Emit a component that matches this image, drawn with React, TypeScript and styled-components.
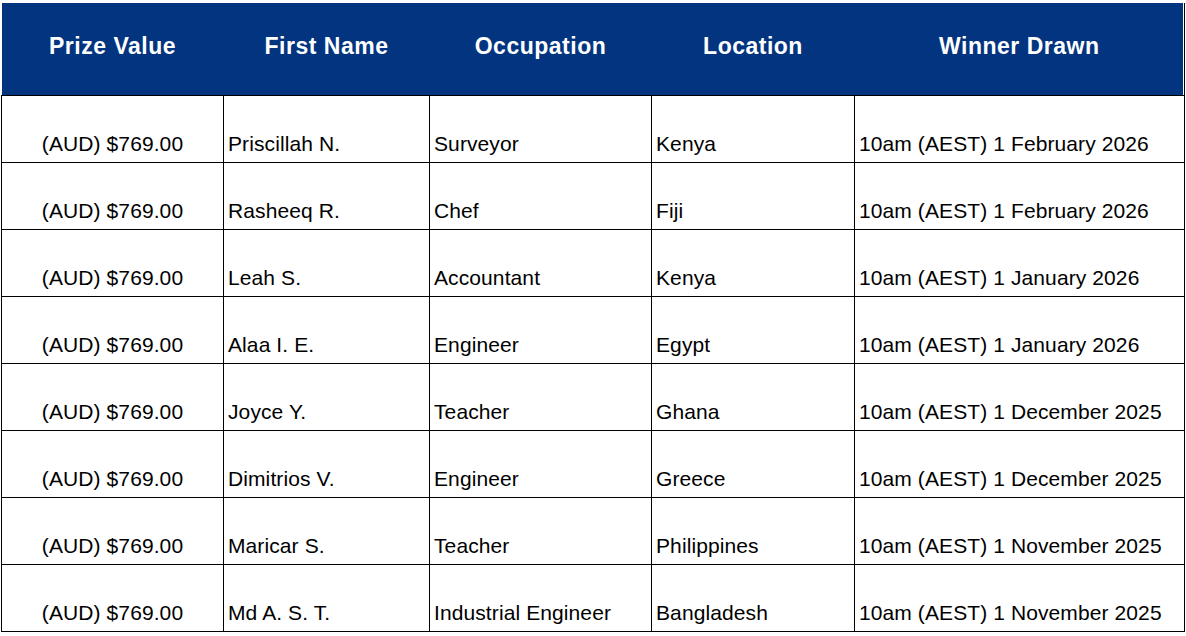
import React from 'react';
import styled, { createGlobalStyle } from 'styled-components';

const GlobalStyle = createGlobalStyle`
  html, body {
    margin: 0;
    padding: 0;
    background: #ffffff;
  }
  body {
    font-family: 'Liberation Sans', Arial, sans-serif;
  }
`;

const Wrapper = styled.div`
  padding: 3px 0 0 1px;
  width: 1186px;
  height: 636px;
  box-sizing: border-box;
  overflow: hidden;
`;

const Table = styled.table`
  width: 1183px;
  border-collapse: collapse;
  table-layout: fixed;
  color: #000;
`;

const HeadCell = styled.th<{ $w: number }>`
  width: ${(p) => p.$w}px;
  height: 92px;
  padding: 0 0 5px;
  background: #02347f;
  color: #fff;
  font-size: 23px;
  font-weight: 700;
  letter-spacing: 0.5px;
  text-align: center;
  vertical-align: middle;
  border: none;
  border-bottom: 1px solid #000;
  box-sizing: border-box;

  &:last-child {
    border-right: 1px solid #000;
    box-shadow: inset -1px 0 0 #fff;
  }
`;

const Row = styled.tr`
  height: 67px;
`;

const Cell = styled.td<{ $center?: boolean }>`
  border: 1px solid #000;
  padding: 0 4px 6px 4px;
  font-size: 21px;
  letter-spacing: 0.1px;
  line-height: 24px;
  text-align: ${(p) => (p.$center ? 'center' : 'left')};
  vertical-align: bottom;
  white-space: nowrap;
  overflow: hidden;
`;

const columns = [
  { label: 'Prize Value', width: 222 },
  { label: 'First Name', width: 206 },
  { label: 'Occupation', width: 222 },
  { label: 'Location', width: 203 },
  { label: 'Winner Drawn', width: 330 },
];

const winners = [
  { prize: '(AUD) $769.00', name: 'Priscillah N.', job: 'Surveyor', place: 'Kenya', drawn: '10am (AEST) 1 February 2026' },
  { prize: '(AUD) $769.00', name: 'Rasheeq R.', job: 'Chef', place: 'Fiji', drawn: '10am (AEST) 1 February 2026' },
  { prize: '(AUD) $769.00', name: 'Leah S.', job: 'Accountant', place: 'Kenya', drawn: '10am (AEST) 1 January 2026' },
  { prize: '(AUD) $769.00', name: 'Alaa I. E.', job: 'Engineer', place: 'Egypt', drawn: '10am (AEST) 1 January 2026' },
  { prize: '(AUD) $769.00', name: 'Joyce Y.', job: 'Teacher', place: 'Ghana', drawn: '10am (AEST) 1 December 2025' },
  { prize: '(AUD) $769.00', name: 'Dimitrios V.', job: 'Engineer', place: 'Greece', drawn: '10am (AEST) 1 December 2025' },
  { prize: '(AUD) $769.00', name: 'Maricar S.', job: 'Teacher', place: 'Philippines', drawn: '10am (AEST) 1 November 2025' },
  { prize: '(AUD) $769.00', name: 'Md A. S. T.', job: 'Industrial Engineer', place: 'Bangladesh', drawn: '10am (AEST) 1 November 2025' },
];

const App: React.FC = () => {
  return (
    <Wrapper>
      <GlobalStyle />
      <Table>
        <thead>
          <tr>
            {columns.map((col) => (
              <HeadCell key={col.label} $w={col.width}>
                {col.label}
              </HeadCell>
            ))}
          </tr>
        </thead>
        <tbody>
          {winners.map((w, index) => (
            <Row key={index}>
              <Cell $center>{w.prize}</Cell>
              <Cell>{w.name}</Cell>
              <Cell>{w.job}</Cell>
              <Cell>{w.place}</Cell>
              <Cell>{w.drawn}</Cell>
            </Row>
          ))}
        </tbody>
      </Table>
    </Wrapper>
  );
};

export default App;
